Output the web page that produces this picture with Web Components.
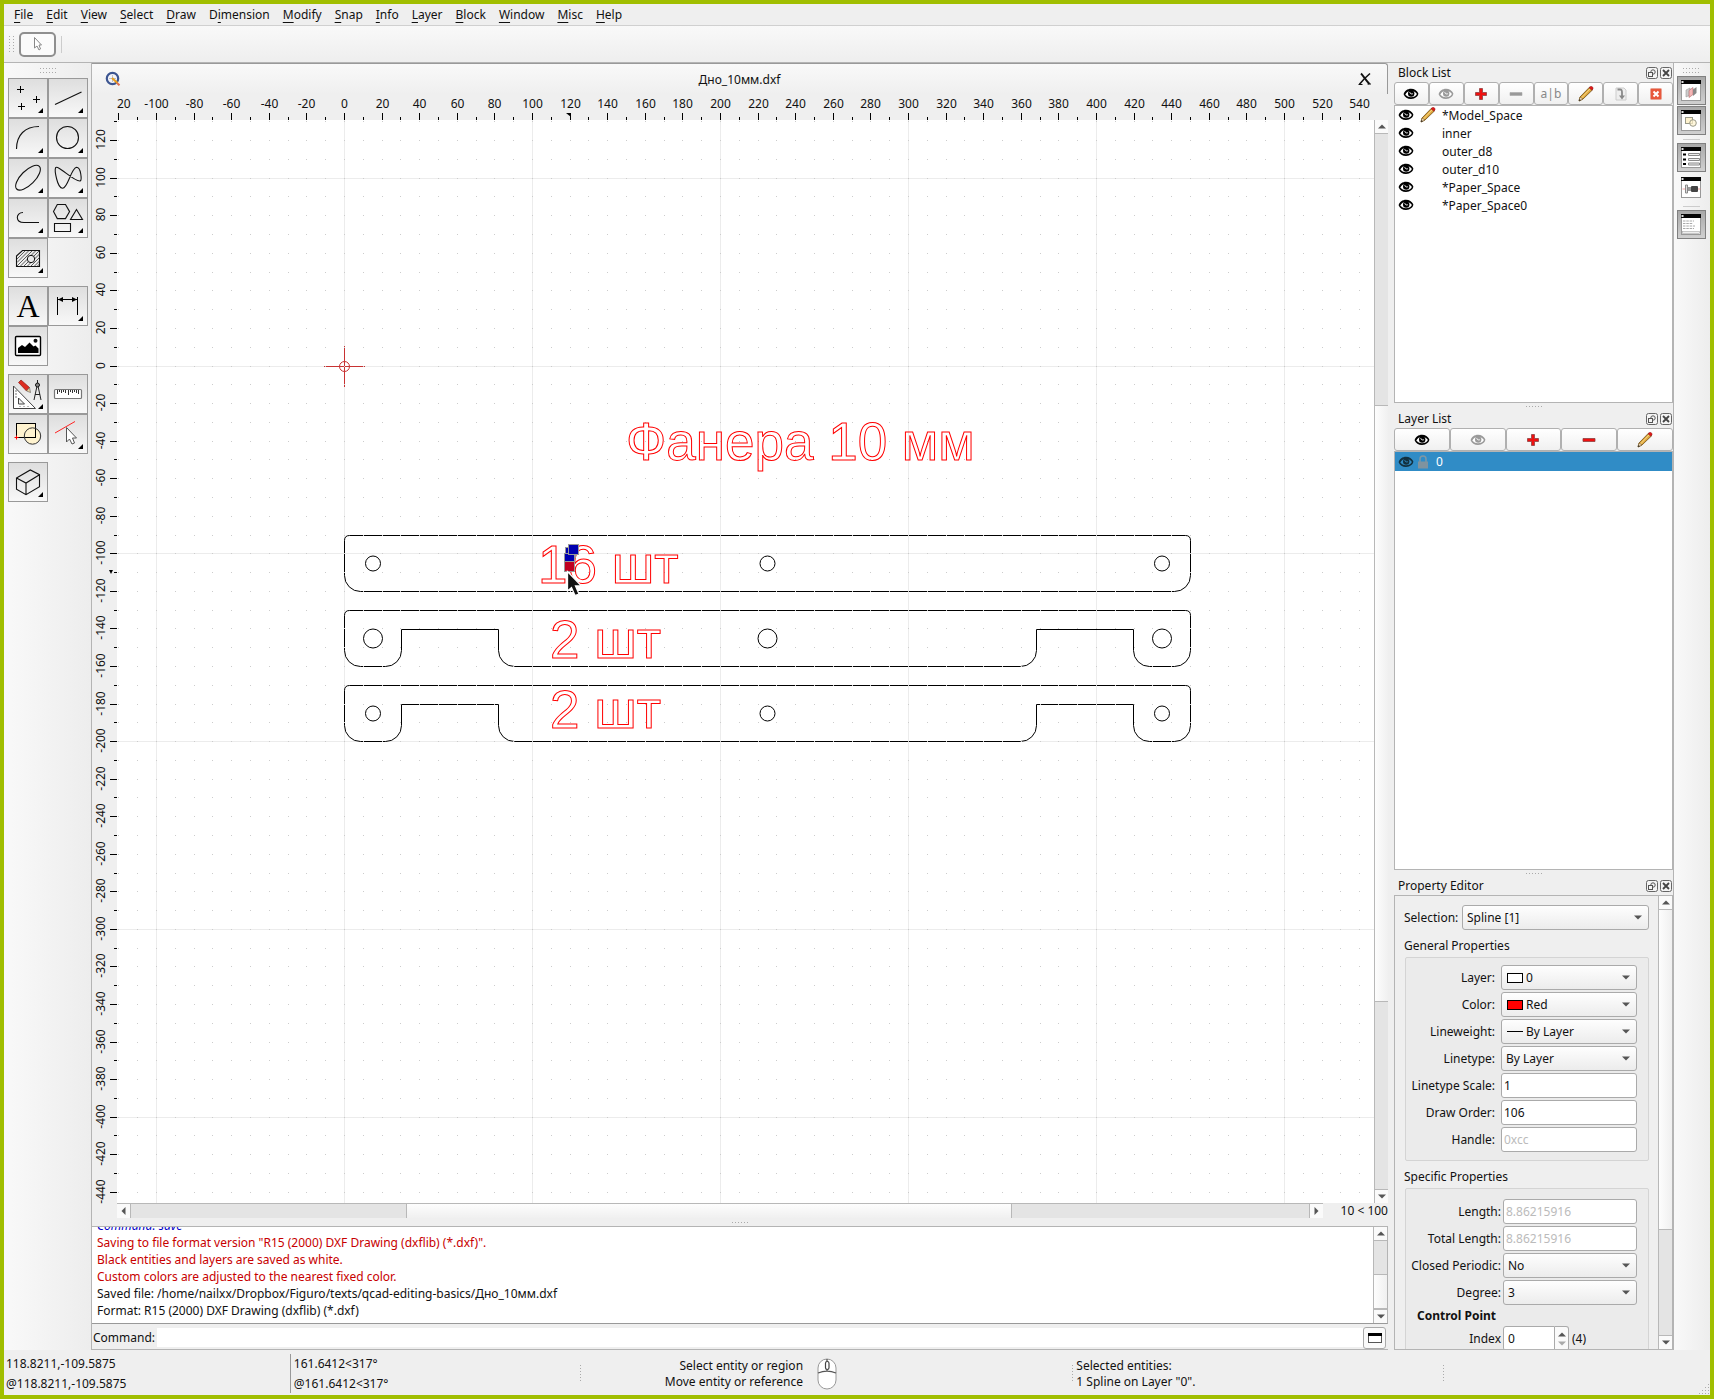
<!DOCTYPE html>
<html lang="en">
<head>
<meta charset="utf-8">
<title>QCAD - Дно_10мм.dxf</title>
<style>
html,body{margin:0;height:100%}
body{font:12px/17px "Noto Sans","Open Sans",sans-serif;color:#111;background:#efefef;overflow:hidden}
</style>
</head>
<body>
<cad-app></cad-app>
<script>
const define=(name,css,html,after)=>customElements.define(name,class extends HTMLElement{
  connectedCallback(){
    if(this.shadowRoot)return;
    const root=this.attachShadow({mode:'open'});
    root.innerHTML=`<style>*{box-sizing:border-box}button,input,select{font:inherit;color:inherit;margin:0}svg{display:block}${css}</style>${typeof html==='function'?html(this):html}`;
    if(after)after(root,this);
  }
});

/* ---------- icons ---------- */
const corner='<path d="M35 30v5h-5z" fill="#000"/>';
const L='fill="none" stroke="#111" stroke-width="1.1"';
const pencil=`<path d="M1 15l1-4L11.500 1.200 14.600 3.800 5 13z" fill="#e0a83c" stroke="#6b4a14" stroke-width=".8"/><path d="M3.500 12L12.500 2.500" stroke="#f7d98b" stroke-width="1"/><path d="M11 1.800L12.500.5c1.200-.6 3 1 2.500 2.200L14 4.300z" fill="#e01818" stroke="#8a2020" stroke-width=".5"/><path d="M1 15l1-4 3 2z" fill="#f0dcc0" stroke="#6b4a14" stroke-width=".5"/><path d="M1 15l.6-2 1.300 1.200z" fill="#222"/>`;
const eye=c=>`<path d="M.6 6.200C1.500 2.800 4.500.7 8 .7c3.300 0 6 1.800 7.300 4.600.3 2.600-3 5.700-7.300 5.700-3.500 0-6.300-1.700-7.400-4.800z" fill="${c}"/><path d="M2.300 6.600C3.500 4 5.500 3 8 3c2.600 0 4.800 1.200 5.900 3-1.200 2.200-3.200 3.200-5.900 3.200-2.500 0-4.500-.9-5.700-2.600z" fill="#fff"/><circle cx="8.200" cy="5.600" r="3.200" fill="${c}"/><path d="M6.800 4.200c.3 1.600 1.400 2 3 1.600" stroke="#fff" stroke-width="1" fill="none"/>`;
const win=inner=>`<rect x="1.500" y=".5" width="19" height="20" fill="#fff" stroke="#999"/><path d="M1 0h20v4H1z" fill="#050505"/><rect x="1.500" y="1" width="2" height="2" fill="#ddd"/>${inner}`;
const ICONS={
 points:[40,40,`<path d="M9 11.500h7M12.500 8v7M25 21.500h7M28.500 18v7M10 28.500h7M13.500 25v7" stroke="#000"/>${corner}`],
 line:[40,40,`<path d="M7 26.500L33.500 14" ${L}/>${corner}`],
 arc:[40,40,`<path d="M8.500 31C8.500 17 17 8.500 31 8.500" ${L}/>${corner}`],
 circle:[40,40,`<circle cx="19.500" cy="19.500" r="11" ${L}/>${corner}`],
 ellipse:[40,40,`<ellipse cx="20" cy="19.700" rx="16" ry="7" transform="rotate(-45 20 19.700)" ${L}/>${corner}`],
 spline:[40,40,`<path d="M7.600 9.700C6.500 12 9 30 14.600 30.300C20 30.300 23 10 28.600 9.300C33 9.300 34 22 32.200 23C26 24 10 6.500 7.600 9.700Z" ${L}/>${corner}`],
 polyline:[40,40,`<path d="M15 14.500C7.500 14.500 7 24.500 16 24.500H31" ${L}/>${corner}`],
 shapes:[40,40,`<path d="M5.500 13.600L9.300 6.500H17.500L21.600 13.600 17.500 20.600H9.300ZM28.500 11.500L22.500 21.500H34.500ZM6.500 25.500h16v8h-16z" ${L}/>${corner}`],
 hatch:[40,40,`<path d="M8.500 18L14.500 12.500H31.500V28.500H8.500Z" ${L}/><path d="M9 21l8-8M9 24.500L20.500 13M9 28L24 13M12 28.500L27.500 13M15.500 28.500L31 13M19 28.500L31.500 16M22.500 28.500L31.500 19.500M26 28.500L31.500 23M29 28.500L31.500 26" stroke="#333" stroke-width=".8"/><circle cx="23" cy="21" r="3.700" fill="#e8e8e8" stroke="#111"/>${corner}`],
 text:[40,40,`<text x="20" y="31" text-anchor="middle" font-family="Liberation Serif,serif" font-size="32" fill="#000">A</text>`],
 dimension:[40,40,`<path d="M9.500 11v18M29.500 11v18M10 13.500h19" stroke="#000"/><path d="M10 13.500l5-2.500v5zM29 13.500l-5-2.500v5z" fill="#000"/>${corner}`],
 image:[40,40,`<rect x="7.500" y="10.500" width="25" height="19" rx="1" fill="#fff" stroke="#000" stroke-width="1.400"/><path d="M10 27v-5l4-3 3 2 4.500-4.500 4 4 2-1 3 3v4.500z" fill="#000"/><circle cx="27.500" cy="14.700" r="2" fill="#111"/>`],
 drafting:[40,40,`<path d="M5.500 12V34.500H27.500ZM10.500 24V30H16.500Z" fill="#fff" fill-rule="evenodd" stroke="#444"/><path d="M7 17h2M7 20h2M7 23h2M12 33v-1M16 33v-1M20 33v-1" stroke="#777"/><path d="M10.500 8.500L13 6l8.500 7.500-3 3.500z" fill="#dd2c20" stroke="#8b1a12" stroke-width=".7"/><path d="M21.500 13.500l1 5-4-1.500z" fill="#f0d3a0" stroke="#555" stroke-width=".6"/><path d="M29.500 6v4M29 12L26 26M30 12l3 14M27 20.500h5" stroke="#222" fill="none"/><circle cx="29.500" cy="11" r="2" fill="#888" stroke="#111"/>${corner}`],
 measure:[40,40,`<rect x="6.500" y="15.500" width="27" height="9" rx="1" fill="#fff" stroke="#777" stroke-width="1.200"/><path d="M9.500 16v4M11.500 16v2M13.500 16v3M15.500 16v2M17.500 16v3M20.500 16v5M22.500 16v2M24.500 16v3M26.500 16v2M28.500 16v3M30.500 16v4" stroke="#333"/>`],
 block:[40,40,`<circle cx="24.500" cy="22" r="8.200" fill="#fff3cf"/><rect x="8.500" y="9.500" width="19" height="14" fill="#fff3cf" stroke="#000"/><circle cx="24.500" cy="22" r="8.200" fill="none" stroke="#333"/><path d="M6.500 23.500h4M8.500 21.500v4" stroke="#f00"/>`],
 modify:[40,40,`<path d="M7 19L27 7.500" stroke="#f22"/><path d="M18.500 13.500V28L21.500 25 24 30 26.500 29 24.500 24H28.500Z" fill="#fff" stroke="#555"/>${corner}`],
 cube:[40,40,`<path d="M8.500 16L22.300 8 31.500 12.700V24.700L18 32.700 8.500 27.300ZM8.500 16L18 21 31.500 12.700M18 21V32.700" ${L}/>${corner}`],
 eye:[16,12,eye('#000')],eyeoff:[16,12,eye('#9a9a9a')],eyeblue:[16,12,eye('#12303f').replace(/#fff/g,'#308cc6')],
 pencil:[16,16,pencil],
 plus:[14,14,'<path d="M5.500 1.500h3v4h4v3h-4v4h-3v-4h-4v-3h4z" fill="#f01010" stroke="#8f4040" stroke-width=".8"/>'],
 minus:[14,14,'<path d="M1 5.500h12v3H1z" fill="#f01010" stroke="#8f4040" stroke-width=".8"/>'],
 minusoff:[14,14,'<path d="M1 5.500h12v3H1z" fill="#999" stroke="#aaa" stroke-width=".6"/>'],
 insert:[14,14,'<path d="M2 1h8l2 2v10H2z" fill="#eee" stroke="#ccc"/><path d="M3.500 2.500H6c2 0 2 1 2 3V9" fill="none" stroke="#888" stroke-width="1.800"/><path d="M5 8.500h6l-3 4z" fill="#888"/>'],
 remove:[12,12,'<rect x=".5" y=".5" width="11" height="11" rx="1" fill="#e8583c" stroke="#e9a294"/><path d="M3.500 3.500l5 5M8.500 3.500l-5 5" stroke="#fff" stroke-width="2"/>'],
 lock:[12,14,'<path d="M3 7V4c0-4 6-4 6 0v3" fill="none" stroke="#7d98a6" stroke-width="1.500"/><path d="M1 6.500h10v7H1z" fill="#7f939f"/>'],
 float:[12,12,'<rect x=".5" y=".5" width="11" height="11" rx="2" fill="#f4f4f4" stroke="#666"/><circle cx="7" cy="5" r="2.200" fill="none" stroke="#555"/><rect x="2.500" y="5.500" width="4" height="4" fill="#f4f4f4" stroke="#555"/>'],
 close:[12,12,'<rect x=".5" y=".5" width="11" height="11" rx="2" fill="#f4f4f4" stroke="#666"/><path d="M3 3l6 6M9 3l-6 6" stroke="#444" stroke-width="1.800"/>'],
 arrowtool:[12,16,'<path d="M2.500 1.500V12L5 10l2 4 1.500-1L7 9h2.500z" fill="#fff" stroke="#888"/>'],
 qcad:[16,16,'<circle cx="7.500" cy="7.500" r="5.700" fill="#f4f4f8" stroke="#3c5591" stroke-width="2.200"/><path d="M7.500 4v7M4 7.500h7" stroke="#b9bfd0"/><path d="M7 7l5.500 5" stroke="#e8a020" stroke-width="2.200"/><path d="M12 12l2.500 2.300" stroke="#e07050" stroke-width="2"/>'],
 xclose:[14,14,'<path d="M3 1.500c2 2 5 7 8.500 10.500" fill="none" stroke="#111" stroke-width="1.900"/><path d="M12 1.500C9 4 4 9 1.500 12.300" fill="none" stroke="#111" stroke-width="1.600"/><path d="M.5 12.500h4M9.500 12h3.500" stroke="#111"/>'],
 cmdwin:[14,12,'<rect x=".5" y="1.500" width="13" height="9" fill="#fff" stroke="#555"/><path d="M0 1h14v3H0z" fill="#000"/>'],
 winlayers:[22,22,win('<path d="M6 10l4-2v7l-4 2z" fill="#ccc" stroke="#999" stroke-width=".6"/><path d="M9 10.500l4-3v7l-4 3z" fill="#f5b5b5" stroke="#a66" stroke-width=".6"/><path d="M13 9.500l3.500-2.500v6l-3.500 3z" fill="#888"/>')],
 winblocks:[22,22,win('<rect x="5.500" y="7.500" width="7" height="6" fill="#fff3cf" stroke="#998"/><circle cx="13" cy="13" r="3.300" fill="#fff3cf" fill-opacity=".7" stroke="#998"/>')],
 winprops:[22,22,win('<path d="M3 6.500h3v2H3zM3 11.500h3v2H3zM3 16h3v2H3z" fill="#000"/><path d="M8.500 6.500h11v2h-11zM8.500 11.500h11v2h-11zM8.500 16h11v2h-11z" fill="#eee" stroke="#888"/>')],
 winlib:[22,22,win('<path d="M2.500 12h18" stroke="#e88" stroke-width=".8"/><path d="M5.500 8h2v8h-2z" fill="#ddd" stroke="#888"/><path d="M8 10h3v4H8z" fill="#999"/><rect x="11" y="9" width="7" height="6" rx="1" fill="#444"/>')],
 wincmd:[22,22,win('<path d="M3 7h11M3 9.500h10M3 12h12M3 14.500h11" stroke="#aaa" stroke-dasharray="2.500 .8"/><rect x="2.500" y="17.500" width="17" height="2" fill="#eee" stroke="#aaa" stroke-width=".6"/>')],
 mouse:[20,32,'<rect x="1" y="1" width="18" height="30" rx="9" fill="#fff" stroke="#999"/><path d="M1 15c6-2.500 12-2.500 18 0M10 1v3M10 11v2" fill="none" stroke="#555" stroke-width="1.300"/><rect x="8.500" y="3.500" width="3.500" height="8" rx="1.700" fill="#fff" stroke="#444" stroke-width="1.200"/>'],
 up:[8,5,'<path d="M0 4.500L4 .5 8 4.500z" fill="#555"/>'],
 down:[8,5,'<path d="M0 .5h8L4 4.500z" fill="#555"/>'],
 downoff:[8,5,'<path d="M0 .5h8L4 4.500z" fill="#aaa"/>'],
 left:[5,8,'<path d="M4.500 0v8L.5 4z" fill="#555"/>'],
 right:[5,8,'<path d="M.5 0v8L4.500 4z" fill="#555"/>'],
 grip:[12,12,'<path d="M1 10.500h1M4 10.500h1M7 10.500h1M10 10.500h1M4 7.500h1M7 7.500h1M10 7.500h1M7 4.500h1M10 4.500h1M10 1.500h1" stroke="#aaa"/>']
};
define('cad-icon',':host{display:block;flex:none}',el=>{
  const [w,h,body]=ICONS[el.getAttribute('name')];
  return `<svg width="${w}" height="${h}" viewBox="0 0 ${w} ${h}" aria-hidden="true">${body}</svg>`;
});
const icon=n=>`<cad-icon name="${n}"></cad-icon>`;

/* dotted drag handle */
define('drag-dots',`:host{display:block;flex:none;width:16px;height:5px;background:conic-gradient(from 90deg at 1px 1px,transparent 50%,#aaa 0 75%,transparent 0) 0 0/3px 4px}
:host([vertical]){width:5px;height:17px;background-size:4px 3px}
:host([thin]){height:1px}:host([vertical][thin]){width:1px;height:17px}`,'');

/* ---------- scroll bar ---------- */
define('scroll-bar',`
:host{display:flex;flex-direction:column;width:14px;flex:none;background:#e4e4e4;border-left:1px solid #b8b8b8}
:host([horizontal]){flex-direction:row;width:auto;height:15px;border-left:0;border-top:1px solid #b8b8b8}
button{flex:none;width:100%;height:14px;border:0;border-bottom:1px solid #b8b8b8;background:#fafafa;padding:0;display:grid;place-items:center}
button:last-child{border-bottom:0;border-top:1px solid #b8b8b8}
:host([horizontal]) button{width:14px;height:100%;border:0;border-right:1px solid #b8b8b8}
:host([horizontal]) button:last-child{border-right:0;border-left:1px solid #b8b8b8}
.thumb{background:linear-gradient(90deg,#fdfdfd,#f0f0f0);border:solid #b8b8b8;border-width:1px 0}
:host([horizontal]) .thumb{background:linear-gradient(#fdfdfd,#f0f0f0);border-width:0 1px}
.thumb.first{border-top:0}`,
el=>{const [a,b,c]=el.getAttribute('parts').split(' '),h=el.hasAttribute('horizontal');
return `<button aria-label="Scroll back">${icon(h?'left':'up')}</button><div style="flex:${a} 1 0"></div><div class="thumb ${a=='0'?'first':''}" style="flex:${b} 1 0"></div><div style="flex:${c} 1 0"></div><button aria-label="Scroll forward">${icon(h?'right':'down')}</button>`;});

/* ---------- menu and option bars ---------- */
define('menu-bar',`:host{display:flex;height:22px;padding-left:4px;background:#efefef;border-bottom:1px solid #d0d0d0}
button{border:0;background:none;padding:0 7px 0 6px;line-height:19px}u{text-underline-offset:3px}`,
['_File','_Edit','_View','_Select','_Draw','D_imension','_Modify','_Snap','_Info','_Layer','_Block','_Window','_Misc','_Help'].map(t=>`<button>${t.replace(/_(.)/,'<u>$1</u>')}</button>`).join(''));
define('option-bar',`:host{display:flex;align-items:center;height:37px;padding-left:5px;gap:5px;background:linear-gradient(#f9f9f9,#eee);border-bottom:1px solid #b4b4b4}
button{width:37px;height:25px;padding:0;border:2px solid #8f8f8f;border-radius:5px;background:#fbfbfb;display:grid;place-items:center}
i{width:1px;height:17px;background:#ccc}`,
`<drag-dots vertical></drag-dots><button aria-label="Reset tool">${icon('arrowtool')}</button><i></i>`);

/* ---------- tool palette ---------- */
define('tool-palette',`:host{display:flex;flex-direction:column;align-items:flex-start;padding:5px 4px;gap:5px;background:linear-gradient(90deg,#f9f9f9,#ededed)}
drag-dots{align-self:center}.groups{display:flex;flex-direction:column;gap:8px}
.g{display:grid;grid-template-columns:repeat(2,40px)}
button{width:40px;height:40px;padding:0;border:1px solid #999;background:linear-gradient(#dedede,#f8f8f8);display:grid;place-items:center}
button cad-icon{margin:-1px}`,
`<drag-dots></drag-dots><div class="groups">${[['points','line','arc','circle','ellipse','spline','polyline','shapes','hatch'],['text','dimension','image'],['drafting','measure','block','modify'],['cube']].map(g=>`<div class="g">${g.map(n=>`<button aria-label="${n}">${icon(n)}</button>`).join('')}</div>`).join('')}</div>`);

/* ---------- drawing: origin at (227,246) inside the view ---------- */
const px=u=>Math.round(227+u*1.88),py=u=>Math.floor(246-u*1.878);
define('cad-ruler',`:host{display:block;background:#efefef;min-width:0;min-height:0;overflow:hidden}:host([vertical]),:host([vertical]) svg{overflow:visible}
text{font-size:12px;fill:#111;text-anchor:middle}`,
el=>{const v=el.hasAttribute('vertical');let s='',t='';
if(v){for(let u=130;u>=-440;u-=10){const y=py(u)+.5,M=u%20===0;s+=`M${M?18:22} ${y}H25`;if(M)t+=`<text transform="translate(13 ${y-1}) rotate(-90)">${u}</text>`}
 return `<svg width="25" height="100%"><path d="${s}" stroke="#000"/><path d="M17 450h4l-2 4z"/>${t}</svg>`}
for(let u=-120;u<=540;u+=10){const x=px(u)+.5,M=u%20===0;s+=`M${x} ${M?19:23}V26`;if(M)t+=u===-120?`<text x="0" y="14" style="text-anchor:start">20</text>`:`<text x="${x}" y="14">${u}</text>`}
return `<svg width="100%" height="26"><path d="${s}" stroke="#000"/><path d="M449 19h5v4z"/>${t}</svg>`});

define('cad-canvas',`:host{display:block;min-width:0;min-height:0;background:#fff;overflow:hidden}
.out{fill:none;stroke:#f00;stroke-width:1;font:53px "Liberation Sans",sans-serif}
.part{fill:none;stroke:#000}`,
()=>{let lines='',dots='';
for(let u=-100;u<=500;u+=100)lines+=`M${px(u)+.5} 0V2000`;
for(let u=100;u>=-400;u-=100)lines+=`M0 ${py(u)+.5}H3000`;
for(let x=-120;x<=540;x+=10)for(let y=130;y>=-440;y-=10)dots+=`M${px(x)} ${py(y)+.5}h1`;
const notch=(y)=>`M232.500 ${y}H1068.500Q1073.500 ${y} 1073.500 ${y+5}V${y+40}A16 16 0 0 1 1057.500 ${y+56}H1032.500A16 16 0 0 1 1016.500 ${y+40}V${y+19}H919.500V${y+40}A16 16 0 0 1 903.500 ${y+56}H397.500A16 16 0 0 1 381.500 ${y+40}V${y+19}H284.500V${y+40}A16 16 0 0 1 268.500 ${y+56}H243.500A16 16 0 0 1 227.500 ${y+40}V${y+5}Q227.500 ${y} 232.500 ${y}Z`;
const holes=(y,r)=>[256,650.5,1045].map(x=>`<circle cx="${x}" cy="${y}" r="${r}"/>`).join('');
return `<svg width="100%" height="100%">
<path d="${lines}" stroke="#ececec"/>
<g stroke="#c83232" fill="none"><path d="M207 246.500h41M227.500 226v41"/><circle cx="227.500" cy="246.500" r="5"/></g>
<g class="part"><path d="M232.500 415.500H1068.500Q1073.500 415.500 1073.500 420.500V455.500A16 16 0 0 1 1057.500 471.500H243.500A16 16 0 0 1 227.500 455.500V420.500Q227.500 415.500 232.500 415.500Z"/><path d="${notch(490.5)}"/><path d="${notch(565.5)}"/>${holes(443.5,7.5)}${holes(518.5,9.5)}${holes(593.5,7.5)}</g>
<path d="${dots}" stroke="#ccc"/>
<g class="out"><text x="509" y="340">Фанера 10 мм</text><text x="421" y="463">16 шт</text><text x="433" y="538">2 шт</text><text x="433" y="608">2 шт</text></g>
<g stroke="#999" fill="#0000b0"><rect x="448.500" y="427.500" width="10" height="10"/><rect x="447.500" y="433.500" width="10" height="9"/><rect x="451.500" y="424.500" width="10" height="10"/><rect x="447.500" y="441.500" width="10" height="10" fill="#c00020"/></g>
<path d="M450.500 451.500V471L454.500 467.500 458 475.500 462 474 458.500 466H464.500Z" fill="#111" stroke="#fff" stroke-width="1.300"/>
</svg>`});

define('doc-window',`:host{display:flex;flex-direction:column;min-width:0;min-height:0;border-left:1px solid #b4b4b4}
.title{display:flex;align-items:center;height:31px;padding:0 15px 0 13px;border:solid #999;border-width:1px 1px 0 0;border-radius:0 3px 0 0;background:linear-gradient(#f9f9f9,#efefef)}
.title b{flex:1;text-align:center;font-weight:normal}
.title button{border:0;background:none;padding:0}
.view{flex:1;min-height:0;display:grid;grid-template:26px minmax(0,1fr)/25px minmax(0,1fr) 14px}
cad-ruler.h{grid-column:2/4}cad-ruler.v{grid-row:2}
.foot{display:flex;align-items:center;height:15px;padding-left:25px}scroll-bar[horizontal]{flex:1}.foot span{width:65px;text-align:right}
.split{height:8px;display:grid;place-items:center}`,
`<div class="title">${icon('qcad')}<b>Дно_10мм.dxf</b><button aria-label="Close">${icon('xclose')}</button></div>
<div class="view"><i></i><cad-ruler class="h"></cad-ruler><cad-ruler class="v" vertical></cad-ruler><cad-canvas></cad-canvas><scroll-bar parts="272 596 188"></scroll-bar></div>
<div class="foot"><scroll-bar horizontal parts="276 606 298"></scroll-bar><span>10 &lt; 100</span></div>
<div class="split"><drag-dots thin></drag-dots></div>
<command-panel></command-panel>`);

define('command-panel',`:host{display:flex;flex-direction:column;flex:none;height:124px;border-bottom:1px solid #b4b4b4}
.log{display:flex;height:98px;border:1px solid #b4b4b4;border-left:0;border-bottom-color:#999;background:#fff;margin-bottom:2px}
.lines{flex:1;min-width:0;overflow:hidden;display:flex;flex-direction:column;justify-content:flex-end;padding:0 0 4px 5px}
p{margin:0;flex:none;white-space:nowrap}.r{color:#c80000}.b{color:#0000c8;font-style:italic}
.row{display:flex;align-items:center;height:23px;padding:0 2px 0 1px}
input{flex:1;min-width:0;height:19px;border:0;background:#fff;margin-left:2px;outline:0}
button{width:23px;height:22px;padding:0;border:1px solid #aaa;border-radius:3px;background:#fafafa;display:grid;place-items:center}`,
`<div class="log"><div class="lines"><p class="b">Command: save</p><p class="r">Saving to file format version "R15 (2000) DXF Drawing (dxflib) (*.dxf)".</p><p class="r">Black entities and layers are saved as white.</p><p class="r">Custom colors are adjusted to the nearest fixed color.</p><p>Saved file: /home/nailxx/Dropbox/Figuro/texts/qcad-editing-basics/Дно_10мм.dxf</p><p>Format: R15 (2000) DXF Drawing (dxflib) (*.dxf)</p></div><scroll-bar parts="35 34 0"></scroll-bar></div>
<div class="row"><label for="cmd">Command:</label><input id="cmd"><button aria-label="Command window">${icon('cmdwin')}</button></div>`);

/* ---------- docks ---------- */
define('dock-panel',`:host{display:flex;flex-direction:column;min-height:0}
.split{height:6px;flex:none;display:grid;place-items:center}:host([first]) .split{display:none}
header{display:flex;align-items:center;gap:2px;height:19px;flex:none;padding:0 1px 0 4px}header b{flex:1;font-weight:normal}
header button{border:0;background:none;padding:0}
.body{flex:1;min-height:0;display:flex;flex-direction:column}`,
el=>`<div class="split"><drag-dots thin></drag-dots></div><header><b>${el.getAttribute('label')}</b><button aria-label="Float">${icon('float')}</button><button aria-label="Close">${icon('close')}</button></header><div class="body"><slot></slot></div>`);

define('icon-row',`:host{display:flex;flex:none;height:23px}
button{flex:1 1 0;padding:0;border:1px solid #b0b0b0;border-radius:3px;background:linear-gradient(#fff,#f0f0f0);display:grid;place-items:center;color:#888}`,
el=>el.getAttribute('items').split(' ').map(n=>`<button aria-label="${n}">${n==='a|b'?'a|b':icon(n)}</button>`).join(''));

define('item-list',`:host{display:block;flex:1;min-height:0;background:#fff;border:1px solid #b4b4b4}
ul{list-style:none;margin:0;padding:0}`,'<ul><slot></slot></ul>');
define('list-row',`:host{display:flex;align-items:center;height:18px;padding-left:3px}
.m{width:24px;flex:none;padding-left:6px;margin-right:4px}
:host([selected]){height:19px;background:#308cc6;color:#fff}:host([selected]) .m{width:19px;padding-left:3px;margin-right:3px}`,
el=>`${icon(el.hasAttribute('selected')?'eyeblue':'eye')}<span class="m">${el.hasAttribute('mark')?icon(el.getAttribute('mark')):''}</span><span><slot></slot></span>`);

define('prop-row',`:host{display:grid;grid-template-columns:var(--label,78px) minmax(0,1fr);column-gap:var(--gap,6px);align-items:center;height:25px}
label{justify-self:end;white-space:nowrap}:host([wide]) label{justify-self:start}
.f{position:relative;height:25px;display:flex;align-items:center}
select,input{width:100%;height:25px;border:1px solid #aaa;border-radius:3px;outline:0}
select{appearance:none;padding:0 20px 0 4px;background:linear-gradient(#fefefe,#ececec)}
input{padding:0 2px;background:#fff}input:disabled{color:#bbb;-webkit-text-fill-color:#bbb}
.a{position:absolute;right:7px;pointer-events:none}
.s{position:absolute;left:6px;width:16px;height:10px;border:1px solid #000;pointer-events:none}
.s.line{height:1px;border:0;background:#000}.sw{padding-left:24px}
:host([spin]) input{width:52px;border-radius:3px 0 0 3px;padding-left:4px}
.spin{width:14px;height:25px;border:1px solid #aaa;border-left:0;border-radius:0 3px 3px 0;background:#fafafa;display:flex;flex-direction:column;justify-content:center;gap:4px;align-items:center;margin-right:3px}`,
el=>{const g=k=>el.getAttribute(k),t=g('type'),v=g('value'),s=g('swatch');
let f;
if(t==='select')f=`${s?`<span class="s ${s}" style="background:${s==='line'?'#000':s}"></span>`:''}<select id="f" class="${s?'sw':''}"><option>${v}</option></select><cad-icon class="a" name="down"></cad-icon>`;
else f=`<input id="f" value="${v}" ${el.hasAttribute('off')?'disabled':''}>`;
if(el.hasAttribute('spin'))f+=`<span class="spin">${icon('up')}${icon('downoff')}</span><span>(4)</span>`;
return `<label for="f">${g('label')}</label><div class="f">${f}</div>`});

define('property-editor',`:host{display:flex;flex:1;min-height:0;border:1px solid #b4b4b4}
.form{flex:1;min-width:0;overflow:hidden;padding:9px 9px 0 9px;display:flex;flex-direction:column}
.form>*{flex:none}
h3{margin:7px 0 3px;font:inherit}
.g{border:1px solid #d4d4d4;border-radius:2px;background:#ebebeb;padding:7px 11px 8px 11px;display:flex;flex-direction:column;gap:2px;margin-left:1px}
.g.two{padding-top:10px;--label:84px;--gap:2px}
.top{--label:54px;--gap:4px}
h4{margin:0;font:inherit;font-weight:bold}`,
`<div class="form"><prop-row class="top" wide type="select" label="Selection:" value="Spline [1]"></prop-row>
<h3>General Properties</h3><div class="g">
<prop-row type="select" label="Layer:" value="0" swatch="white"></prop-row><prop-row type="select" label="Color:" value="Red" swatch="red"></prop-row><prop-row type="select" label="Lineweight:" value="By Layer" swatch="line"></prop-row><prop-row type="select" label="Linetype:" value="By Layer"></prop-row><prop-row label="Linetype Scale:" value="1"></prop-row><prop-row label="Draw Order:" value="106"></prop-row><prop-row label="Handle:" value="0xcc" off></prop-row></div>
<h3>Specific Properties</h3><div class="g two">
<prop-row label="Length:" value="8.86215916" off></prop-row><prop-row label="Total Length:" value="8.86215916" off></prop-row><prop-row type="select" label="Closed Periodic:" value="No"></prop-row><prop-row type="select" label="Degree:" value="3"></prop-row><h4>Control Point</h4><prop-row spin label="Index" value="0"></prop-row></div></div>
<scroll-bar parts="0 320 106"></scroll-bar>`);

define('dock-area',`:host{display:flex;flex-direction:column;min-height:0;padding-left:5px;border-right:1px solid #b4b4b4}
.a{flex:340 1 0}.b{flex:467 1 0}.c{flex:480 1 0}`,
`<dock-panel class="a" first label="Block List"><icon-row items="eye eyeoff plus minusoff a|b pencil insert remove"></icon-row><item-list><list-row mark="pencil">*Model_Space</list-row><list-row>inner</list-row><list-row>outer_d8</list-row><list-row>outer_d10</list-row><list-row>*Paper_Space</list-row><list-row>*Paper_Space0</list-row></item-list></dock-panel>
<dock-panel class="b" label="Layer List"><icon-row items="eye eyeoff plus minus pencil"></icon-row><item-list><list-row selected mark="lock">0</list-row></item-list></dock-panel>
<dock-panel class="c" label="Property Editor"><property-editor></property-editor></dock-panel>`);

define('window-bar',`:host{display:flex;flex-direction:column;align-items:center;padding:5px 2px 0 0;background:linear-gradient(90deg,#f9f9f9,#ededed)}
drag-dots{margin-bottom:3px}
button{width:29px;height:29px;padding:0;border:1px solid transparent;background:none;display:grid;place-items:center;margin-bottom:1px}
button[aria-pressed=true]{border-color:#808080;background:linear-gradient(#a8a8a8,#d0d0d0)}
hr{width:17px;height:1px;border:0;background:#ccc;margin:3px 0}`,
`<drag-dots></drag-dots><button aria-pressed="true" aria-label="Layers">${icon('winlayers')}</button><button aria-pressed="true" aria-label="Blocks">${icon('winblocks')}</button><hr><button aria-pressed="true" aria-label="Properties">${icon('winprops')}</button><button aria-label="Library">${icon('winlib')}</button><hr><button aria-pressed="true" aria-label="Command line">${icon('wincmd')}</button>`);

define('status-bar',`:host{display:flex;box-sizing:border-box;height:45px;padding-top:2px;background:#efefef;align-items:center}
.c{line-height:20px;height:39px;padding-left:2px}.c.one{flex:284 1 0}.c.two{flex:286 1 0;border-left:1px solid #999;padding-left:3px}
.t{line-height:16px;white-space:nowrap}.m{flex:493 1 0;display:flex;align-items:center;gap:14px}.m .t{flex:224 1 0;text-align:right}.m cad-icon{flex:256 1 0}
.s{flex:371 1 0;display:flex;align-items:center;gap:3px}.e{flex:254 1 0}
.m drag-dots{margin-right:-15px}
.g{align-self:flex-end}`,
`<div class="c one">118.8211,-109.5875<br>@118.8211,-109.5875</div><div class="c two">161.6412&lt;317°<br>@161.6412&lt;317°</div>
<div class="m"><drag-dots vertical thin></drag-dots><div class="t">Select entity or region<br>Move entity or reference</div>${icon('mouse')}</div>
<div class="s"><drag-dots vertical thin></drag-dots><div class="t">Selected entities:<br>1 Spline on Layer "0".</div></div>
<drag-dots vertical thin></drag-dots><div class="e"></div><cad-icon class="g" name="grip"></cad-icon>`);

define('cad-app',`:host{display:grid;box-sizing:border-box;height:100vh;border:4px solid #a0be00;background:#efefef;
grid-template:auto auto minmax(0,1fr) auto/87px minmax(0,1fr) 286px 36px;}
menu-bar,option-bar,status-bar{grid-column:1/-1}dock-area{margin-left:1px}`,
'<menu-bar></menu-bar><option-bar></option-bar><tool-palette></tool-palette><doc-window></doc-window><dock-area></dock-area><window-bar></window-bar><status-bar></status-bar>');
</script>
</body>
</html>
